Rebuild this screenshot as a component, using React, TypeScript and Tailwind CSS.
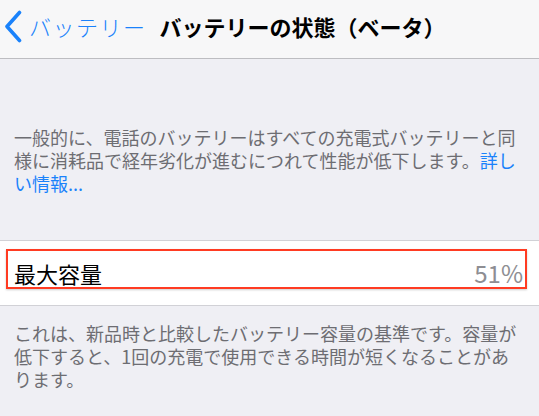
import React from "react";

const font = { fontFamily: '"Noto Sans CJK JP", "Noto Sans", sans-serif' };

const BackChevron = () => (
  <svg width="20" height="33" viewBox="0 0 20 33" fill="none">
    <path
      d="M16.5 2.5 L4 16.5 L16.5 30.5"
      stroke="#1a82fb"
      strokeWidth="3.6"
      strokeLinecap="round"
      strokeLinejoin="round"
    />
  </svg>
);

const App: React.FC = () => {
  return (
    <div
      className="w-[539px] h-[416px] overflow-hidden bg-[#efeff4]"
      style={font}
    >
      <header className="h-[59px] bg-[#f7f7f8] border-b border-[#bdbdc1] flex items-center pb-[6px] pl-[3px]">
        <BackChevron />
        <span className="ml-[6px] text-[22px] tracking-[1.5px] text-[#1a82fb] leading-none font-light">
          バッテリー
        </span>
        <span className="ml-[13px] text-[22px] font-bold text-black leading-none">
          バッテリーの状態（ベータ）
        </span>
      </header>

      <p className="px-[14px] pt-[67px] text-[18px] leading-[23px] text-[#6d6d72]">
        一般的に、電話のバッテリーはすべての充電式バッテリーと同様に消耗品で経年劣化が進むにつれて性能が低下します。
        <span className="text-[#1a82fb]">詳しい情報...</span>
      </p>

      <div className="relative mt-[45px] h-[66px] bg-white border-y border-[#d1d1d6] flex items-center justify-between pl-[14px] pr-[16px]">
        <span className="text-[22px] leading-none text-black">最大容量</span>
        <span className="text-[24px] leading-none text-[#8e8e93]">51%</span>
        <div className="absolute left-[6px] right-[12px] top-[8px] h-[40px] border-2 border-[#ff3b22] shadow-[0_1px_2px_rgba(0,0,0,0.2)]" />
      </div>

      <p className="px-[14px] pt-[16px] text-[18px] leading-[23px] text-[#6d6d72]">
        これは、新品時と比較したバッテリー容量の基準です。容量が低下すると、1回の充電で使用できる時間が短くなることがあります。
      </p>
    </div>
  );
};

export default App;
